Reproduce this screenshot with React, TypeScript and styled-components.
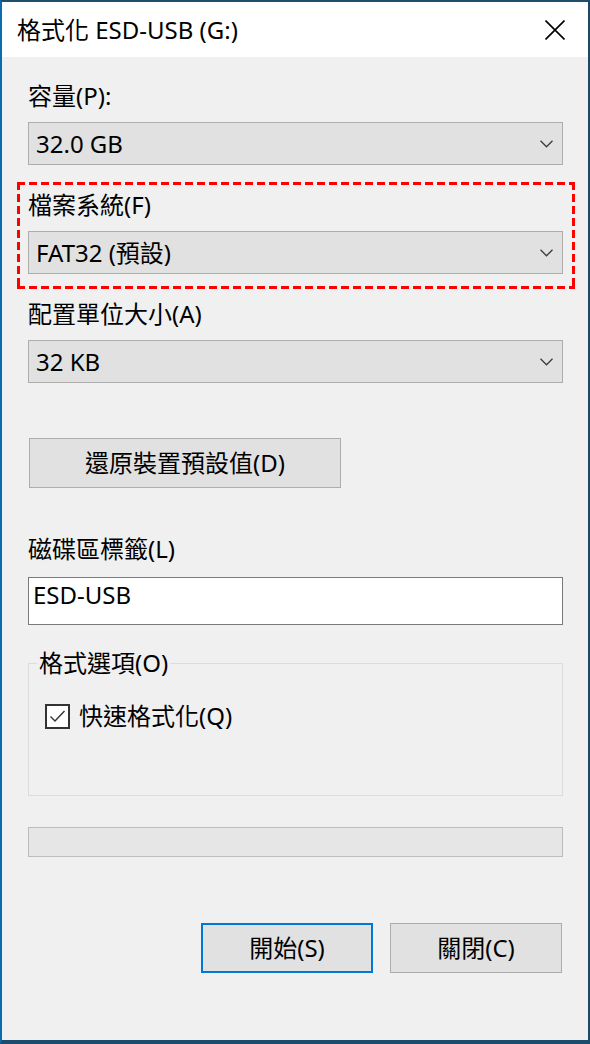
import React from "react";
import styled, { createGlobalStyle } from "styled-components";

const GlobalStyle = createGlobalStyle`
  html, body {
    margin: 0;
    padding: 0;
    background: #f0f0f0;
  }
  * { box-sizing: border-box; }
  body {
    font-family: "Noto Sans", "Noto Sans CJK TC", sans-serif;
    color: #000;
  }
`;

const Window = styled.div`
  width: 590px;
  height: 1044px;
  display: flex;
  flex-direction: column;
  background: #f0f0f0;
  border-top: 2px solid #1f4e6f;
  border-left: 2px solid #0c6cab;
  border-right: 2px solid #1b4969;
  border-bottom: 4px solid #1b4c6e;
  font-size: 24px;
  line-height: 32px;
`;

const TitleBar = styled.div`
  height: 55px;
  flex: none;
  background: #fff;
  display: flex;
  align-items: center;
  justify-content: space-between;
  padding: 0 23px 0 15px;
`;

const Title = styled.div`
  font-size: 24px;
  line-height: 32px;
  white-space: nowrap;
`;

const CloseButton = styled.div`
  width: 20px;
  height: 20px;
  display: flex;
`;

const Body = styled.div`
  flex: 1;
  display: flex;
  flex-direction: column;
  padding: 23px 25px 0 26px;
`;

const Fields = styled.div`
  display: flex;
  flex-direction: column;
  gap: 24px;
`;

const Field = styled.div`
  display: flex;
  flex-direction: column;
  gap: 10px;
`;

const Highlight = styled.div`
  margin: -7px -12px -15px -11px;
  padding: 7px 12px 15px 11px;
  background:
    linear-gradient(to right, #f00 0 8px, transparent 8px 12px) top left / 12px 3px repeat-x,
    linear-gradient(to right, #f00 0 8px, transparent 8px 12px) bottom left / 12px 3px repeat-x,
    linear-gradient(to bottom, #f00 0 8px, transparent 8px 12px) top left / 3px 12px repeat-y,
    linear-gradient(to bottom, #f00 0 8px, transparent 8px 12px) top right / 3px 12px repeat-y;
`;

const Label = styled.div<{ $top?: number }>`
  line-height: 32px;
  margin-top: ${(p) => p.$top ?? 0}px;
  white-space: nowrap;
`;

const Select = styled.div`
  height: 43px;
  border: 1px solid #adadad;
  background: #e1e1e1;
  display: flex;
  align-items: center;
  justify-content: space-between;
  padding: 0 9px 0 7px;
  white-space: nowrap;
`;

const Chevron = () => (
  <svg width="13" height="8" viewBox="0 0 13 8">
    <path d="M0.5 0.8 L6.5 6.8 L12.5 0.8" fill="none" stroke="#3c3c3c" strokeWidth="1.3" />
  </svg>
);

const Button = styled.div<{ $width: number; $primary?: boolean }>`
  width: ${(p) => p.$width}px;
  height: 50px;
  flex: none;
  display: flex;
  align-items: center;
  justify-content: center;
  background: #e1e1e1;
  border: ${(p) => (p.$primary ? "2px solid #0078d7" : "1px solid #adadad")};
  white-space: nowrap;
`;

const ResetButton = styled(Button)`
  margin-top: 55px;
  margin-left: 1px;
`;

const TextInput = styled.div`
  height: 48px;
  margin-top: 12px;
  background: #fff;
  border: 1px solid #7a7a7a;
  padding: 1px 0 0 4px;
  line-height: 32px;
`;

const Group = styled.fieldset`
  margin: 22px 0 0 0;
  padding: 21px 0 63px 0;
  border: 1px solid #dcdcdc;
  min-width: 0;
`;

const Legend = styled.legend`
  margin-left: 8px;
  padding: 0 2px;
  line-height: 32px;
`;

const CheckRow = styled.div`
  display: flex;
  align-items: center;
  gap: 9px;
  height: 32px;
  padding-left: 16px;
`;

const CheckBox = styled.div`
  width: 25px;
  height: 25px;
  border: 2px solid #333;
  background: #fff;
  display: flex;
  align-items: center;
  justify-content: center;
`;

const Progress = styled.div`
  margin-top: 31px;
  height: 30px;
  border: 1px solid #bcbcbc;
  background: #e6e6e6;
`;

const ButtonRow = styled.div`
  margin-top: 66px;
  display: flex;
  justify-content: flex-end;
  gap: 17px;
  padding-right: 1px;
`;

export default function App() {
  return (
    <>
      <GlobalStyle />
      <Window>
        <TitleBar>
          <Title>格式化 ESD-USB (G:)</Title>
          <CloseButton>
            <svg width="20" height="20" viewBox="0 0 20 20">
              <path d="M0.5 0.5 L19.5 19.5 M19.5 0.5 L0.5 19.5" stroke="#000" strokeWidth="1.6" />
            </svg>
          </CloseButton>
        </TitleBar>
        <Body>
          <Fields>
            <Field>
              <Label>容量(P):</Label>
              <Select>
                <span>32.0 GB</span>
                <Chevron />
              </Select>
            </Field>
            <Highlight>
              <Field>
                <Label>檔案系統(F)</Label>
                <Select>
                  <span>FAT32 (預設)</span>
                  <Chevron />
                </Select>
              </Field>
            </Highlight>
            <Field>
              <Label>配置單位大小(A)</Label>
              <Select>
                <span>32 KB</span>
                <Chevron />
              </Select>
            </Field>
          </Fields>
          <ResetButton $width={312}>還原裝置預設值(D)</ResetButton>
          <Label $top={45}>磁碟區標籤(L)</Label>
          <TextInput>ESD-USB</TextInput>
          <Group>
            <Legend>格式選項(O)</Legend>
            <CheckRow>
              <CheckBox>
                <svg width="19" height="19" viewBox="0 0 19 19">
                  <path d="M2.5 9.5 L7 14 L16.5 4" fill="none" stroke="#333" strokeWidth="1.4" />
                </svg>
              </CheckBox>
              <span>快速格式化(Q)</span>
            </CheckRow>
          </Group>
          <Progress />
          <ButtonRow>
            <Button $width={172} $primary>開始(S)</Button>
            <Button $width={172}>關閉(C)</Button>
          </ButtonRow>
        </Body>
      </Window>
    </>
  );
}
